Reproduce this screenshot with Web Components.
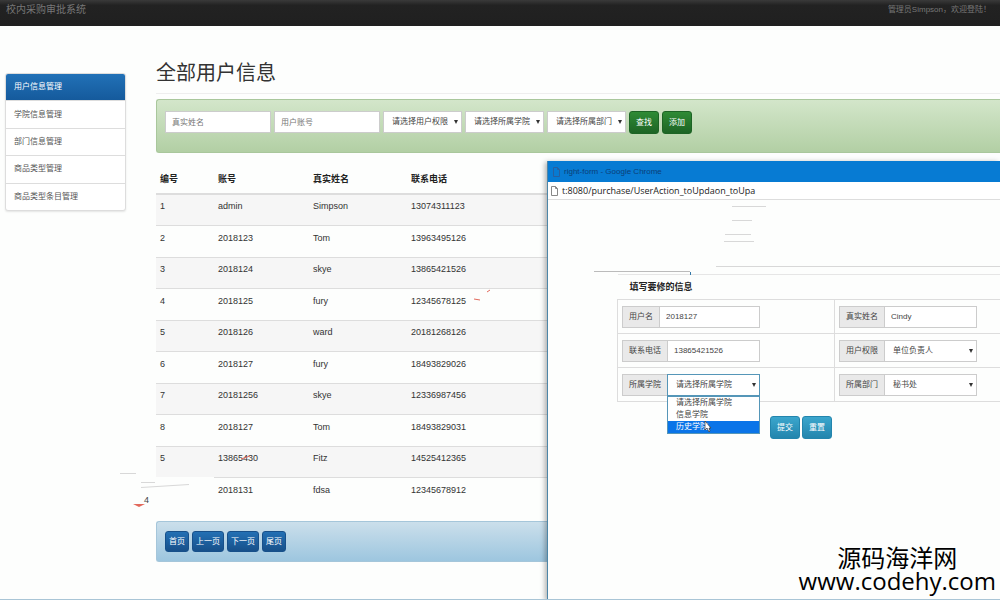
<!DOCTYPE html>
<html lang="zh-CN">
<head>
<meta charset="utf-8">
<title>校内采购审批系统</title>
<style>
  body {
    margin: 0;
    font-family: "Liberation Sans", "Noto Sans CJK SC", sans-serif;
    font-size: 8px;
    line-height: 12px;
    color: #444;
    background: #fdfefd;
  }
</style>
</head>
<body>
<purchase-app></purchase-app>

<script>
const base = `
  *, *::before, *::after { box-sizing: border-box; }
  button, input, select { font: inherit; color: inherit; margin: 0; outline: none; }
`;

function define(name, html, setup) {
  customElements.define(name, class extends HTMLElement {
    constructor() {
      super();
      this.attachShadow({ mode: 'open' });
    }

    connectedCallback() {
      this.shadowRoot.innerHTML = `<style>${base}</style>` + (typeof html === 'function' ? html(this) : html);
      if (setup) setup(this.shadowRoot, this);
    }
  });
}

define('top-bar', `
  <style>
    :host {
      display: flex;
      justify-content: space-between;
      height: 26px;
      padding: 4px 9px 0 6px;
      background: linear-gradient(#3a3a3a, #222 20%, #202020);
      color: #777;
    }
    a { color: #777; font-size: 10px; text-decoration: none; }
  </style>
  <a href="#">校内采购审批系统</a>
  <slot></slot>
`);

define('side-menu', el => `
  <style>
    :host { display: block; }
    nav {
      display: flex;
      flex-direction: column;
      min-height: 138px;
      border: 1px solid #ddd;
      border-radius: 3px;
      box-shadow: 0 1px 2px rgba(0, 0, 0, .1);
      overflow: hidden;
      background: #fff;
    }
    a {
      display: flex;
      flex: 1;
      align-items: center;
      padding: 0 8px;
      color: #555;
      text-decoration: none;
    }
    a + a { border-top: 1px solid #ddd; }
    a.active {
      margin: -1px -1px 0;
      padding: 1px 9px 0;
      color: #fff;
      background: linear-gradient(#2272b8, #155a9c);
    }
  </style>
  <nav>
    ${el.getAttribute('items').split(',').map((t, i) =>
      `<a href="#"${i === 0 ? ' class="active"' : ''}>${t}</a>`).join('')}
  </nav>
`);

define('text-box', el => `
  <style>
    :host { display: block; }
    input {
      display: block;
      width: 100%;
      height: 22px;
      padding: 0 6px;
      border: 1px solid #ccc;
      background: #fff;
    }
    input::placeholder { color: #777; opacity: 1; }
  </style>
  <input type="text" aria-label="${el.getAttribute('label')}"
    placeholder="${el.getAttribute('placeholder') || ''}" value="${el.getAttribute('value') || ''}">
`);

define('select-box', el => `
  <style>
    :host { display: grid; align-items: center; }
    select, svg { grid-area: 1 / 1; }
    select {
      width: 100%;
      height: 22px;
      padding: 0 8px;
      border: 1px solid #ccc;
      border-radius: 0;
      background: #fff;
      appearance: none;
    }
    :host([open]) select { border-color: #5596b8; }
    svg { justify-self: end; margin-right: 4px; pointer-events: none; }
  </style>
  <select aria-label="${el.getAttribute('label')}">
    ${el.getAttribute('options').split(',').map(t => `<option>${t}</option>`).join('')}
  </select>
  <svg width="4" height="4" viewBox="0 0 4 4"><path d="M0 0h4L2 4z" fill="#333"/></svg>
`);

define('push-button', `
  <style>
    :host { display: block; --from: #2f8b35; --to: #1d6425; }
    :host([kind="primary"]) { --from: #2370b4; --to: #17508a; }
    :host([kind="info"]) { --from: #3ba6cd; --to: #2385ad; }
    button {
      display: block;
      height: 23px;
      padding: 0 6px;
      border: 1px solid var(--to);
      border-radius: 3px;
      color: #fff;
      background: linear-gradient(var(--from), var(--to));
    }
    :host([kind="primary"]) button { height: 21px; padding: 0 3px; }
  </style>
  <button type="button"><slot></slot></button>
`);

define('tool-well', `
  <style>
    :host {
      display: flex;
      align-items: flex-start;
      gap: 3px;
      padding: 11px 8px;
      border: 1px solid #a9c79c;
      border-right: 0;
      border-radius: 3px 0 0 3px;
      background: linear-gradient(#d3e6ca, #b2cfa4);
    }
    :host([tone="blue"]) {
      padding: 9px 8px;
      border-color: #a5c6da;
      background: linear-gradient(#cbdfeb, #9dc6df);
    }
  </style>
  <slot></slot>
`);

const users = [
  ['1', 'admin', 'Simpson', '13074311123'],
  ['2', '2018123', 'Tom', '13963495126'],
  ['3', '2018124', 'skye', '13865421526'],
  ['4', '2018125', 'fury', '12345678125'],
  ['5', '2018126', 'ward', '20181268126'],
  ['6', '2018127', 'fury', '18493829026'],
  ['7', '20181256', 'skye', '12336987456'],
  ['8', '2018127', 'Tom', '18493829031'],
  ['5', '13865430', 'Fitz', '14525412365'],
  ['', '2018131', 'fdsa', '12345678912']
];

define('user-table', `
  <style>
    :host { display: block; }
    table { width: 100%; border-collapse: collapse; table-layout: fixed; }
    th, td { padding: 0 4px; text-align: left; }
    th { height: 31px; padding-top: 2px; font-size: 9px; color: #222; border-bottom: 2px solid #ddd; }
    th:nth-child(1) { width: 58px; }
    th:nth-child(2) { width: 95px; }
    th:nth-child(3) { width: 98px; }
    td { height: 31px; padding-bottom: 7px; font-size: 9px; color: #333; border-top: 1px solid #ddd; }
    tr:nth-child(even) td { height: 32px; }
    tbody tr:nth-child(odd) { background: #f6f6f6; }
    tbody tr:nth-child(10) td:first-child { background: #fdfefd; border: 0; }
  </style>
  <table>
    <thead><tr><th>编号</th><th>账号</th><th>真实姓名</th><th>联系电话</th></tr></thead>
    <tbody></tbody>
  </table>
`, root => {
  root.querySelector('tbody').innerHTML = users.map(row =>
    `<tr>${row.map(v => `<td>${v}</td>`).join('')}</tr>`).join('');
});

define('form-group', el => `
  <style>
    :host { display: flex; width: 138px; }
    label {
      flex: none;
      padding: 4px 6px;
      border: 1px solid #ccc;
      border-right: 0;
      background: #e9e9e9;
    }
    ::slotted(*) { flex: 1; min-width: 0; }
  </style>
  <label>${el.getAttribute('label')}</label>
  <slot></slot>
`);

define('option-list', el => `
  <style>
    :host {
      display: block;
      position: absolute;
      z-index: 2;
      top: 100%;
      right: 0;
      left: 45px;
      border: 1px solid #5596b8;
      background: #fff;
    }
    ul { margin: 0; padding: 0; list-style: none; }
    li { padding-left: 8px; white-space: nowrap; }
    li:last-child { color: #fff; background: #0a74e8; }
    svg { position: absolute; left: 36px; bottom: 0; }
  </style>
  <ul role="listbox">
    ${el.getAttribute('options').split(',').map(t => `<li role="option">${t}</li>`).join('')}
  </ul>
  <svg width="8" height="13" viewBox="0 0 8 13"><path d="M1 1v9l2-2 2 4 1-1-1-3h2z" fill="#fff" stroke="#333" stroke-width=".7"/></svg>
`);

define('popup-window', `
  <style>
    :host {
      display: flex;
      flex-direction: column;
      position: absolute;
      top: 161px;
      right: 0;
      bottom: 0;
      left: 54.7%;
      border-left: 1px solid #4d86a8;
      background: #fdfefd;
      box-shadow: -2px 1px 5px rgba(0, 0, 0, .3);
    }
    header, .url { display: flex; align-items: center; gap: 4px; }
    header { height: 21px; padding-left: 5px; color: #0b3f78; background: #077bd3; }
    .url {
      height: 18px;
      padding-left: 3px;
      font: 9px "Open Sans", sans-serif;
      color: #222;
      border-bottom: 1px solid #ddd;
      background: #fff;
    }
    form { margin: 74px 0 0 69px; }
    table { width: 100%; border-collapse: collapse; }
    th {
      height: 25px;
      padding-left: 12px;
      text-align: left;
      font-size: 9px;
      color: #222;
      border-top: 1px solid #e6e6e6;
    }
    td { height: 34px; padding: 0 4px; border: 1px solid #ddd; border-right: 0; }
    td:first-child { width: 217px; }
    .open { position: relative; width: 138px; }
    .actions { display: flex; gap: 2px; padding: 14px 0 0 153px; }
  </style>
  <header>
    <svg width="7" height="10" viewBox="0 0 7 10"><path d="M.5.5h4l2 2v7h-6zM4.500 .5v2h2" fill="none" stroke="#2860a0"/></svg>
    <span>right-form - Google Chrome</span>
  </header>
  <div class="url">
    <svg width="7" height="10" viewBox="0 0 7 10"><path d="M.5.5h4l2 2v7h-6zM4.500 .5v2h2" fill="#fff" stroke="#888"/></svg>
    <span>t:8080/purchase/UserAction_toUpdaon_toUpa</span>
  </div>
  <form>
    <table>
      <thead><tr><th colspan="2">填写要修的信息</th></tr></thead>
      <tbody>
        <tr>
          <td><form-group label="用户名"><text-box label="用户名" value="2018127"></text-box></form-group></td>
          <td><form-group label="真实姓名"><text-box label="真实姓名" value="Cindy"></text-box></form-group></td>
        </tr>
        <tr>
          <td><form-group label="联系电话"><text-box label="联系电话" value="13865421526"></text-box></form-group></td>
          <td><form-group label="用户权限"><select-box label="用户权限" options="单位负责人"></select-box></form-group></td>
        </tr>
        <tr>
          <td>
            <div class="open">
              <form-group label="所属学院"><select-box open label="所属学院" options="请选择所属学院"></select-box></form-group>
              <option-list options="请选择所属学院,信息学院,历史学院"></option-list>
            </div>
          </td>
          <td><form-group label="所属部门"><select-box label="所属部门" options="秘书处"></select-box></form-group></td>
        </tr>
      </tbody>
    </table>
    <div class="actions">
      <push-button kind="info">提交</push-button>
      <push-button kind="info">重置</push-button>
    </div>
  </form>
`);

// loose strokes and the displaced row number lying over the page
define('stray-marks', `
  <style>
    :host { position: absolute; inset: 0; z-index: 3; pointer-events: none; overflow: hidden; }
    svg { position: absolute; top: 0; left: 0; }
    span { position: absolute; top: 494px; left: 144px; font-size: 9px; }
  </style>
  <svg width="1000" height="600" fill="none" stroke="#d8d8d8">
    <path d="M120 473.500h16M141 482.500h14M141 487.500l48-3M725 234.500h26M732 220.500h20M724 241.500h30M716 266.500h284M732 206.500h34"/>
    <path d="M594 271.500h96" stroke="#bbb"/>
    <path d="M690.500 272v3" stroke="#3478a8"/>
    <path d="M487 292l3-2M474 299l6 1M241 459l9-3" stroke="#e2695c"/>
    <path d="M133 504h12l-6 3z" fill="#e2695c" stroke="none"/>
  </svg>
  <span>4</span>
`);

define('site-mark', `
  <style>
    :host {
      display: block;
      position: absolute;
      z-index: 4;
      right: 4px;
      bottom: 8px;
      font-size: 24px;
      line-height: 22px;
      color: #000;
      text-align: center;
    }
    .url { font-family: "Open Sans", sans-serif; }
  </style>
  <div>源码海洋网</div>
  <div class="url">www.codehy.com</div>
`);

define('purchase-app', `
  <style>
    :host { display: block; position: relative; min-height: 100vh; overflow: hidden; }
    .layout { display: flex; gap: 30px; padding-left: 5px; }
    side-menu { flex: none; width: 121px; margin-top: 47px; }
    main { flex: 1; min-width: 0; padding-top: 33px; }
    h1 {
      margin: 0 0 5px;
      padding-bottom: 6px;
      font-size: 20px;
      line-height: 28px;
      font-weight: 400;
      color: #333;
      border-bottom: 1px solid #eee;
    }
    tool-well text-box { width: 106px; }
    tool-well select-box { width: 79px; }
    tool-well:not([tone]) { min-height: 54px; }
    user-table { margin: 10px 0 12px; }
    .edge { position: absolute; z-index: 5; right: 0; bottom: 0; left: 0; height: 1px; background: #a9c5d6; }
  </style>
  <top-bar>管理员Simpson，欢迎登陆！</top-bar>
  <div class="layout">
    <side-menu items="用户信息管理,学院信息管理,部门信息管理,商品类型管理,商品类型条目管理"></side-menu>
    <main>
      <h1>全部用户信息</h1>
      <tool-well>
        <text-box label="真实姓名" placeholder="真实姓名"></text-box>
        <text-box label="用户账号" placeholder="用户账号"></text-box>
        <select-box label="用户权限" options="请选择用户权限"></select-box>
        <select-box label="所属学院" options="请选择所属学院"></select-box>
        <select-box label="所属部门" options="请选择所属部门"></select-box>
        <push-button>查找</push-button>
        <push-button>添加</push-button>
      </tool-well>
      <user-table></user-table>
      <tool-well tone="blue">
        <push-button kind="primary">首页</push-button>
        <push-button kind="primary">上一页</push-button>
        <push-button kind="primary">下一页</push-button>
        <push-button kind="primary">尾页</push-button>
      </tool-well>
    </main>
  </div>
  <popup-window></popup-window>
  <stray-marks></stray-marks>
  <site-mark></site-mark>
  <div class="edge"></div>
`);
</script>
</body>
</html>
